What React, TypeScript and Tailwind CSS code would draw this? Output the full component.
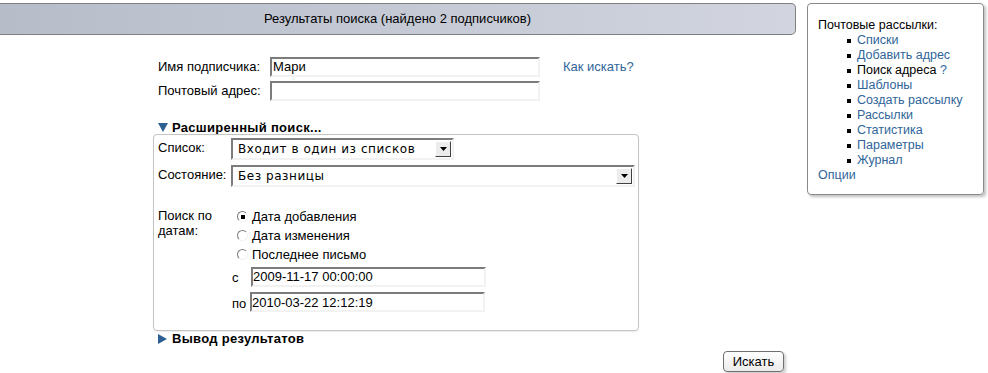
import React from 'react';

const inset =
  'border-2 border-t-[#7c7c7c] border-l-[#7c7c7c] border-b-[#f2f2f2] border-r-[#f2f2f2] bg-white';

function Select({ value, width }: { value: string; width: string }) {
  return (
    <div className={`${inset} ${width} h-[22px] flex items-center justify-between pl-[5px] pr-[1px]`}>
      <span className="font-['DejaVu_Sans',sans-serif] text-[12px] tracking-[0.55px] text-black">{value}</span>
      <span className="w-[16px] h-[16px] bg-[#ececec] border border-t-white border-l-white border-b-[#404040] border-r-[#404040] flex items-center justify-center">
        <svg width="7" height="4" viewBox="0 0 7 4">
          <path d="M0 0h7L3.5 4z" fill="#000" />
        </svg>
      </span>
    </div>
  );
}

function Radio({ checked, label }: { checked?: boolean; label: string }) {
  return (
    <div className="h-[19px] flex items-center gap-[4px]">
      <span className="w-[11px] h-[11px] rounded-full border border-t-[#7c7c7c] border-l-[#7c7c7c] border-b-[#f2f2f2] border-r-[#f2f2f2] flex items-center justify-center">
        {checked && <span className="w-[4px] h-[4px] bg-black" />}
      </span>
      <span className="text-[13px]">{label}</span>
    </div>
  );
}

const menu = [
  { t: 'Списки', link: true },
  { t: 'Добавить адрес', link: true },
  { t: 'Поиск адреса ?', link: false },
  { t: 'Шаблоны', link: true },
  { t: 'Создать рассылку', link: true },
  { t: 'Рассылки', link: true },
  { t: 'Статистика', link: true },
  { t: 'Параметры', link: true },
  { t: 'Журнал', link: true },
];

export default function App() {
  return (
    <div className="w-[988px] h-[373px] bg-white flex font-['Liberation_Sans',Arial,sans-serif] text-black overflow-hidden">
      <div className="w-[796px] flex flex-col pt-[3px]">
        <div className="h-[32px] border-y border-r border-[#7f7f7f] rounded-r-[5px] bg-gradient-to-r from-[#b6bdc9] to-[#d2d5e0] flex items-center justify-center text-[13px]">
          Результаты поиска (найдено 2 подписчиков)
        </div>

        <div className="ml-[153px] mt-[22px] flex flex-col">
          <div className="flex items-start h-[20px] pl-[5px]">
            <span className="w-[112px] text-[13px]">Имя подписчика:</span>
            <div className={`${inset} w-[270px] h-[20px] flex items-center pl-[1px] text-[13px]`}>Мари</div>
            <a className="ml-[23px] text-[13px] text-[#30659a]">Как искать?</a>
          </div>
          <div className="flex items-start h-[20px] mt-[4px] pl-[5px]">
            <span className="w-[112px] text-[13px]">Почтовый адрес:</span>
            <div className={`${inset} w-[270px] h-[20px]`} />
          </div>

          <div className="mt-[20px] h-[13px] pl-[5px] flex items-center gap-[4px] text-[13px] font-bold">
            <svg width="10" height="9" viewBox="0 0 10 9">
              <path d="M0 0h10L5 9z" fill="#2d5f93" />
            </svg>
            <span className="tracking-[0.3px]">Расширенный поиск...</span>
          </div>

          <div className="w-[486px] h-[197px] border border-[#c4c4c4] rounded-[4px] shadow-[0_1px_1px_rgba(0,0,0,0.08)] pt-[3px] pl-[4px] flex flex-col">
            <div className="flex items-start">
              <span className="w-[73px] text-[13px]">Список:</span>
              <Select value="Входит в один из списков" width="w-[223px]" />
            </div>
            <div className="flex items-start mt-[5px]">
              <span className="w-[73px] text-[13px]">Состояние:</span>
              <Select value="Без разницы" width="w-[404px]" />
            </div>
            <div className="flex items-start mt-[20px]">
              <span className="w-[74px] text-[13px] leading-[15px] pt-[1px]">
                Поиск по
                <br />
                датам:
              </span>
              <div className="flex flex-col">
                <div className="pl-[5px]">
                  <Radio checked label="Дата добавления" />
                  <Radio label="Дата изменения" />
                  <Radio label="Последнее письмо" />
                </div>
                <div className="flex items-center mt-[2px]">
                  <span className="w-[19px] text-[13px] pt-[2px]">с</span>
                  <div className={`${inset} w-[235px] h-[20px] flex items-center text-[13px]`}>2009-11-17 00:00:00</div>
                </div>
                <div className="flex items-center mt-[4px]">
                  <span className="w-[18px] text-[13px] pt-[2px]">по</span>
                  <div className={`${inset} w-[235px] h-[20px] flex items-center text-[13px]`}>2010-03-22 12:12:19</div>
                </div>
              </div>
            </div>
          </div>

          <div className="mt-[1px] h-[14px] pl-[5px] flex items-center gap-[5px] text-[13px] font-bold">
            <svg width="9" height="10" viewBox="0 0 9 10">
              <path d="M0 0v10l9-5z" fill="#2d5f93" />
            </svg>
            <span className="tracking-[0.3px]">Вывод результатов</span>
          </div>
        </div>

        <div className="flex justify-end pr-[12px] mt-[5px]">
          <button className="w-[61px] h-[21px] border border-[#6f6f6f] rounded-[4px] bg-gradient-to-b from-white to-[#ececec] shadow-[2px_2px_3px_rgba(0,0,0,0.2)] text-[13px] leading-none">
            Искать
          </button>
        </div>
      </div>

      <div className="ml-[11px] mt-[3px] w-[177px] h-[192px] border border-[#8a8a8a] rounded-[4px] shadow-[2px_2px_3px_rgba(0,0,0,0.25)] pt-[14px] pl-[10px] text-[12.5px] leading-[15px]">
        <div>Почтовые рассылки:</div>
        <ul className="pl-[29px]">
          {menu.map((m) => (
            <li key={m.t} className="flex items-center gap-[6px]">
              <span className="w-[4px] h-[4px] bg-black" />
              <span className={m.link ? 'text-[#30659a]' : 'text-black'}>
                {m.link ? m.t : (
                  <>
                    Поиск адреса <span className="text-[#30659a]">?</span>
                  </>
                )}
              </span>
            </li>
          ))}
        </ul>
        <div className="text-[#30659a]">Опции</div>
      </div>
    </div>
  );
}
